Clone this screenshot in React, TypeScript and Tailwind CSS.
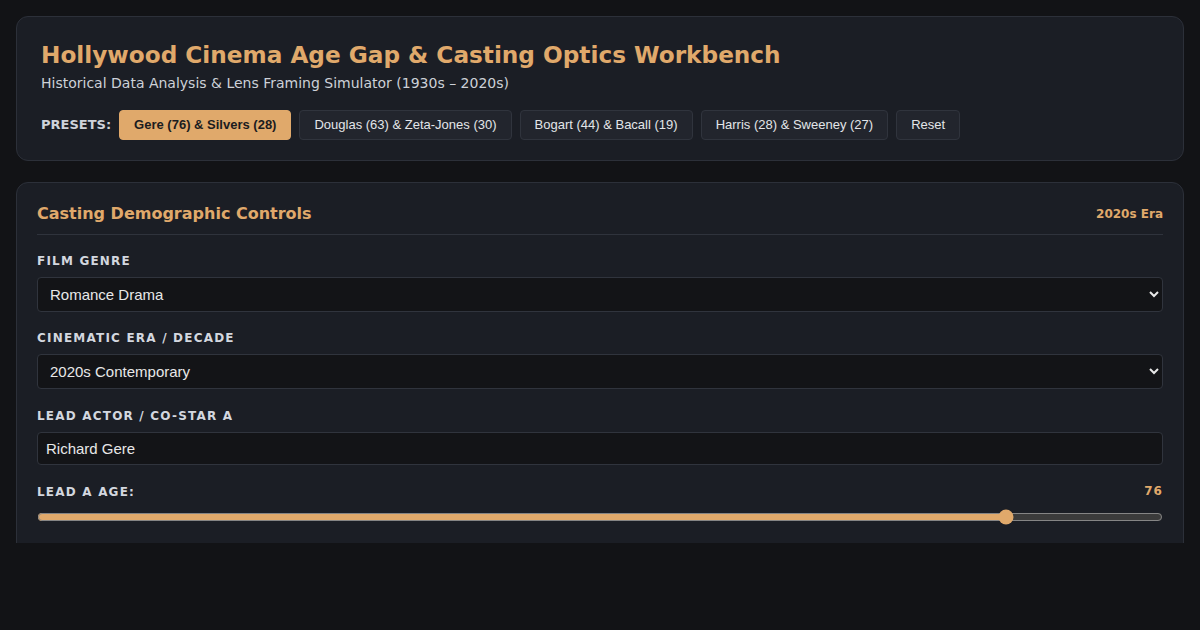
import { useState } from "react";

const presets = [
  { label: "Gere (76) & Silvers (28)", active: true },
  { label: "Douglas (63) & Zeta-Jones (30)" },
  { label: "Bogart (44) & Bacall (19)" },
  { label: "Harris (28) & Sweeney (27)" },
  { label: "Reset" },
];

function Label({ children }: { children: React.ReactNode }) {
  return (
    <label className="block mb-[7px] text-[12px] leading-[17px] font-bold tracking-[0.1em] uppercase text-[#d3d7df]">
      {children}
    </label>
  );
}

export default function App() {
  const [genre, setGenre] = useState("romance");
  const [era, setEra] = useState("2020s");
  const [leadA, setLeadA] = useState("Richard Gere");
  const [ageA, setAgeA] = useState(76);

  return (
    <div className="min-h-[630px] bg-[#121316] [color-scheme:dark] font-['DejaVu_Sans',sans-serif]">
      <div className="h-[543px] overflow-hidden px-4 pt-4">
        <header className="rounded-xl border border-[#2c3039] bg-[#1b1e25] px-6 pt-[23px] pb-5">
          <h1 className="text-[23.2px] leading-[29px] font-bold text-[#e0a96b]">
            Hollywood Cinema Age Gap &amp; Casting Optics Workbench
          </h1>
          <p className="mt-[4px] text-[14px] leading-5 text-[#cdd1d8]">
            Historical Data Analysis &amp; Lens Framing Simulator (1930s – 2020s)
          </p>
          <div className="mt-[17px] flex items-center gap-2">
            <span className="text-[13px] font-bold text-[#cfd3da]">PRESETS:</span>
            {presets.map((p) => (
              <button
                key={p.label}
                className={
                  p.active
                    ? "h-[30px] rounded px-[14px] font-['Liberation_Sans',Arial,sans-serif] text-[13px] font-bold border border-[#e0a96b] bg-[#e0a96b] text-[#1b1c20]"
                    : "h-[30px] rounded px-[14px] font-['Liberation_Sans',Arial,sans-serif] text-[13px] border border-[#30343d] bg-[#22252d] text-[#e3e5e9]"
                }
              >
                {p.label}
              </button>
            ))}
          </div>
        </header>

        <section className="mt-[21px] rounded-t-xl border border-[#2c3039] bg-[#1b1e25] px-5 pt-5 pb-24">
          <div className="flex items-center justify-between border-b border-[#2f333c] pb-[9px]">
            <h2 className="text-[16px] leading-[22px] font-bold text-[#e0a96b]">Casting Demographic Controls</h2>
            <span className="text-[12px] font-bold text-[#e0a96b]">2020s Era</span>
          </div>

          <div className="mt-[18px]">
            <Label>Film Genre</Label>
            <select
              value={genre}
              onChange={(e) => setGenre(e.target.value)}
              className="h-[35px] w-full rounded border border-[#30343d] bg-[#131417] px-2 font-['Liberation_Sans',Arial,sans-serif] text-[15px] text-[#e8e8e8] outline-none"
            >
              <option value="romance">Romance Drama</option>
              <option value="comedy">Romantic Comedy</option>
              <option value="thriller">Thriller</option>
            </select>
          </div>

          <div className="mt-[18px]">
            <Label>Cinematic Era / Decade</Label>
            <select
              value={era}
              onChange={(e) => setEra(e.target.value)}
              className="h-[35px] w-full rounded border border-[#30343d] bg-[#131417] px-2 font-['Liberation_Sans',Arial,sans-serif] text-[15px] text-[#e8e8e8] outline-none"
            >
              <option value="1930s">1930s Golden Age</option>
              <option value="2020s">2020s Contemporary</option>
            </select>
          </div>

          <div className="mt-[19px]">
            <Label>Lead Actor / Co-Star A</Label>
            <input
              value={leadA}
              onChange={(e) => setLeadA(e.target.value)}
              className="h-[33px] w-full rounded border border-[#30343d] bg-[#131417] px-2 font-['Liberation_Sans',Arial,sans-serif] text-[15px] text-[#e8e8e8] outline-none"
            />
          </div>

          <div className="mt-[19px]">
            <div className="flex items-start justify-between">
              <Label>Lead A Age:</Label>
              <span className="text-[12px] leading-[15px] font-bold tracking-[0.09em] text-[#e0a96b]">{ageA}</span>
            </div>
            <input
              type="range"
              min={18}
              max={85}
              value={ageA}
              onChange={(e) => setAgeA(Number(e.target.value))}
              className="mt-px block w-full accent-[#e0a96b]"
            />
          </div>
        </section>
      </div>
    </div>
  );
}
